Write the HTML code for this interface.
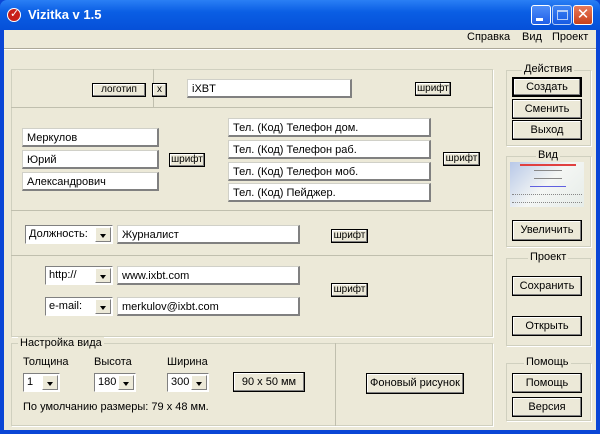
<!DOCTYPE html>
<html><head><meta charset="utf-8"><style>
*{box-sizing:border-box;margin:0;padding:0}
body{width:600px;height:434px;background:#0a46d6;position:relative;overflow:hidden;font-family:Tahoma,"Liberation Sans","DejaVu Sans",sans-serif;font-size:11px;color:#000}
.a{position:absolute}
#win{left:4px;top:30px;width:592px;height:400px;background:#ece9d8}
#title{left:0;top:0;width:600px;height:30px;background:linear-gradient(#2a7ff5,#0a5ee4 40%,#0650d8);border-radius:7px 7px 0 0}
.fb{background:#fff;border:1px solid #d0d0c8;border-right:2px solid #808080;border-bottom:2px solid #808080;padding:2px 4px;line-height:14px;white-space:nowrap}
.btn{background:#ece9d8;border:1px solid #000;box-shadow:inset -1px -1px 0 #808080,inset 1px 1px 0 #fff;text-align:center;white-space:nowrap}
.sm{font-size:10px;line-height:12px}
.grp{border:1px solid #d0d0bf;box-shadow:1px 1px 0 #fff}
.lg{background:#ece9d8;padding:0 2px;font-size:11px}
.dd{position:absolute;right:1px;top:1px;bottom:1px;width:16px;background:#ece9d8;border:1px solid #fff;border-right-color:#808080;border-bottom-color:#808080}
.dd:after{content:"";position:absolute;left:4px;top:6px;border:3px solid transparent;border-top:4px solid #000}
.cb{position:absolute;background:#fff;border:1px solid #808080;border-right-color:#fff;border-bottom-color:#fff;padding:2px 3px;line-height:13px}
.tb{width:20px;height:20px;top:5px;border:1px solid #fff;border-radius:3px;background:linear-gradient(#4f8ef8,#1f5ee8)}
</style></head><body>
<div class="a" id="title"></div>
<div class="a" style="left:7px;top:8px;width:14px;height:14px;border-radius:50%;background:#c8201a;border:1px solid #fff"></div>
<div class="a" style="left:10px;top:7px;color:#fff;font-size:11px;font-weight:bold">✓</div>
<div class="a" style="left:28px;top:7px;color:#fff;font-weight:bold;font-size:13px">Vizitka v 1.5</div>
<div class="a tb" style="left:531px"><div class="a" style="left:4px;top:12px;width:7px;height:3px;background:#fff"></div></div>
<div class="a tb" style="left:552px;opacity:.7"><div class="a" style="left:4px;top:4px;width:11px;height:10px;border:1px solid #fff;border-top-width:2px"></div></div>
<div class="a tb" style="left:573px;background:linear-gradient(#e87a5a,#c8401a);color:#fff;text-align:center;font-size:15px;line-height:18px;font-weight:bold">✕</div>
<div class="a" id="win"></div>
<div class="a" style="left:467px;top:31px">Справка</div>
<div class="a" style="left:522px;top:31px">Вид</div>
<div class="a" style="left:552px;top:31px">Проект</div>
<div class="a" style="left:4px;top:48px;width:592px;height:2px;border-top:1px solid #aca899;border-bottom:1px solid #fff"></div>

<div class="a grp" style="left:11px;top:69px;width:482px;height:268px"></div>
<div class="a" style="left:153px;top:69px;width:1px;height:38px;background:#c0bfae"></div>
<div class="a" style="left:11px;top:107px;width:482px;height:1px;background:#c0bfae"></div>
<div class="a" style="left:11px;top:210px;width:482px;height:1px;background:#c0bfae"></div>
<div class="a" style="left:11px;top:255px;width:482px;height:1px;background:#c0bfae"></div>

<div class="a btn sm" style="left:92px;top:83px;width:54px;height:14px">логотип</div>
<div class="a btn sm" style="left:152px;top:83px;width:15px;height:14px">x</div>
<div class="a fb" style="left:187px;top:79px;width:165px;height:19px">iXBT</div>
<div class="a btn sm" style="left:415px;top:82px;width:36px;height:14px">шрифт</div>

<div class="a fb" style="left:22px;top:128px;width:137px;height:19px">Меркулов</div>
<div class="a fb" style="left:22px;top:150px;width:137px;height:19px">Юрий</div>
<div class="a fb" style="left:22px;top:172px;width:137px;height:19px">Александрович</div>
<div class="a btn sm" style="left:169px;top:153px;width:36px;height:14px">шрифт</div>

<div class="a fb" style="left:228px;top:118px;width:203px;height:19px">Тел. (Код) Телефон дом.</div>
<div class="a fb" style="left:228px;top:140px;width:203px;height:19px">Тел. (Код) Телефон раб.</div>
<div class="a fb" style="left:228px;top:162px;width:203px;height:19px">Тел. (Код) Телефон моб.</div>
<div class="a fb" style="left:228px;top:183px;width:203px;height:19px">Тел. (Код) Пейджер.</div>
<div class="a btn sm" style="left:443px;top:152px;width:37px;height:14px">шрифт</div>

<div class="cb" style="left:25px;top:225px;width:88px;height:19px">Должность:<div class="dd"></div></div>
<div class="a fb" style="left:117px;top:225px;width:183px;height:19px">Журналист</div>
<div class="a btn sm" style="left:331px;top:229px;width:37px;height:14px">шрифт</div>

<div class="cb" style="left:45px;top:266px;width:68px;height:19px">http://<div class="dd"></div></div>
<div class="a fb" style="left:117px;top:266px;width:183px;height:19px">www.ixbt.com</div>
<div class="cb" style="left:45px;top:297px;width:68px;height:19px">e-mail:<div class="dd"></div></div>
<div class="a fb" style="left:117px;top:297px;width:183px;height:19px">merkulov@ixbt.com</div>
<div class="a btn sm" style="left:331px;top:283px;width:37px;height:14px">шрифт</div>

<div class="a grp" style="left:11px;top:343px;width:482px;height:83px"></div>
<div class="a" style="left:335px;top:343px;width:1px;height:83px;background:#c0bfae"></div>
<div class="a lg" style="left:18px;top:337px">Настройка вида</div>
<div class="a" style="left:23px;top:356px">Толщина</div>
<div class="a" style="left:94px;top:356px">Высота</div>
<div class="a" style="left:167px;top:356px">Ширина</div>
<div class="cb" style="left:23px;top:373px;width:37px;height:19px">1<div class="dd"></div></div>
<div class="cb" style="left:94px;top:373px;width:42px;height:19px">180<div class="dd"></div></div>
<div class="cb" style="left:167px;top:373px;width:42px;height:19px">300<div class="dd"></div></div>
<div class="a btn" style="left:233px;top:372px;width:72px;height:20px;line-height:18px">90 x 50 мм</div>
<div class="a btn" style="left:366px;top:373px;width:98px;height:21px;line-height:19px">Фоновый рисунок</div>
<div class="a" style="left:23px;top:401px">По умолчанию размеры: 79 x 48 мм.</div>

<div class="a grp" style="left:506px;top:70px;width:85px;height:76px"></div>
<div class="a lg" style="left:522px;top:63px">Действия</div>
<div class="a btn" style="left:512px;top:77px;width:70px;height:20px;line-height:17px;border-width:2px">Создать</div>
<div class="a btn" style="left:512px;top:99px;width:70px;height:20px;line-height:18px">Сменить</div>
<div class="a btn" style="left:512px;top:120px;width:70px;height:20px;line-height:18px">Выход</div>

<div class="a grp" style="left:506px;top:156px;width:85px;height:91px"></div>
<div class="a lg" style="left:536px;top:149px">Вид</div>
<div class="a" style="left:510px;top:162px;width:74px;height:45px;background:linear-gradient(135deg,#b8c8e8,#f4f6f4 50%,#e6ece8)"><div class="a" style="left:10px;top:2px;width:56px;height:2px;background:#e04040"></div><div class="a" style="left:24px;top:8px;width:28px;height:9px;border-top:1px solid #888;border-bottom:1px solid #888"></div><div class="a" style="left:20px;top:24px;width:36px;height:1px;background:#6060e0"></div><div class="a" style="left:2px;top:32px;width:70px;height:9px;border-top:1px dotted #888;border-bottom:1px dotted #888"></div></div>
<div class="a btn" style="left:512px;top:220px;width:70px;height:21px;line-height:19px">Увеличить</div>

<div class="a grp" style="left:506px;top:258px;width:85px;height:88px"></div>
<div class="a lg" style="left:528px;top:251px">Проект</div>
<div class="a btn" style="left:512px;top:276px;width:70px;height:20px;line-height:18px">Сохранить</div>
<div class="a btn" style="left:512px;top:316px;width:70px;height:20px;line-height:18px">Открыть</div>

<div class="a grp" style="left:506px;top:363px;width:85px;height:58px"></div>
<div class="a lg" style="left:524px;top:356px">Помощь</div>
<div class="a btn" style="left:512px;top:373px;width:70px;height:20px;line-height:18px">Помощь</div>
<div class="a btn" style="left:512px;top:397px;width:70px;height:20px;line-height:18px">Версия</div>
</body></html>
